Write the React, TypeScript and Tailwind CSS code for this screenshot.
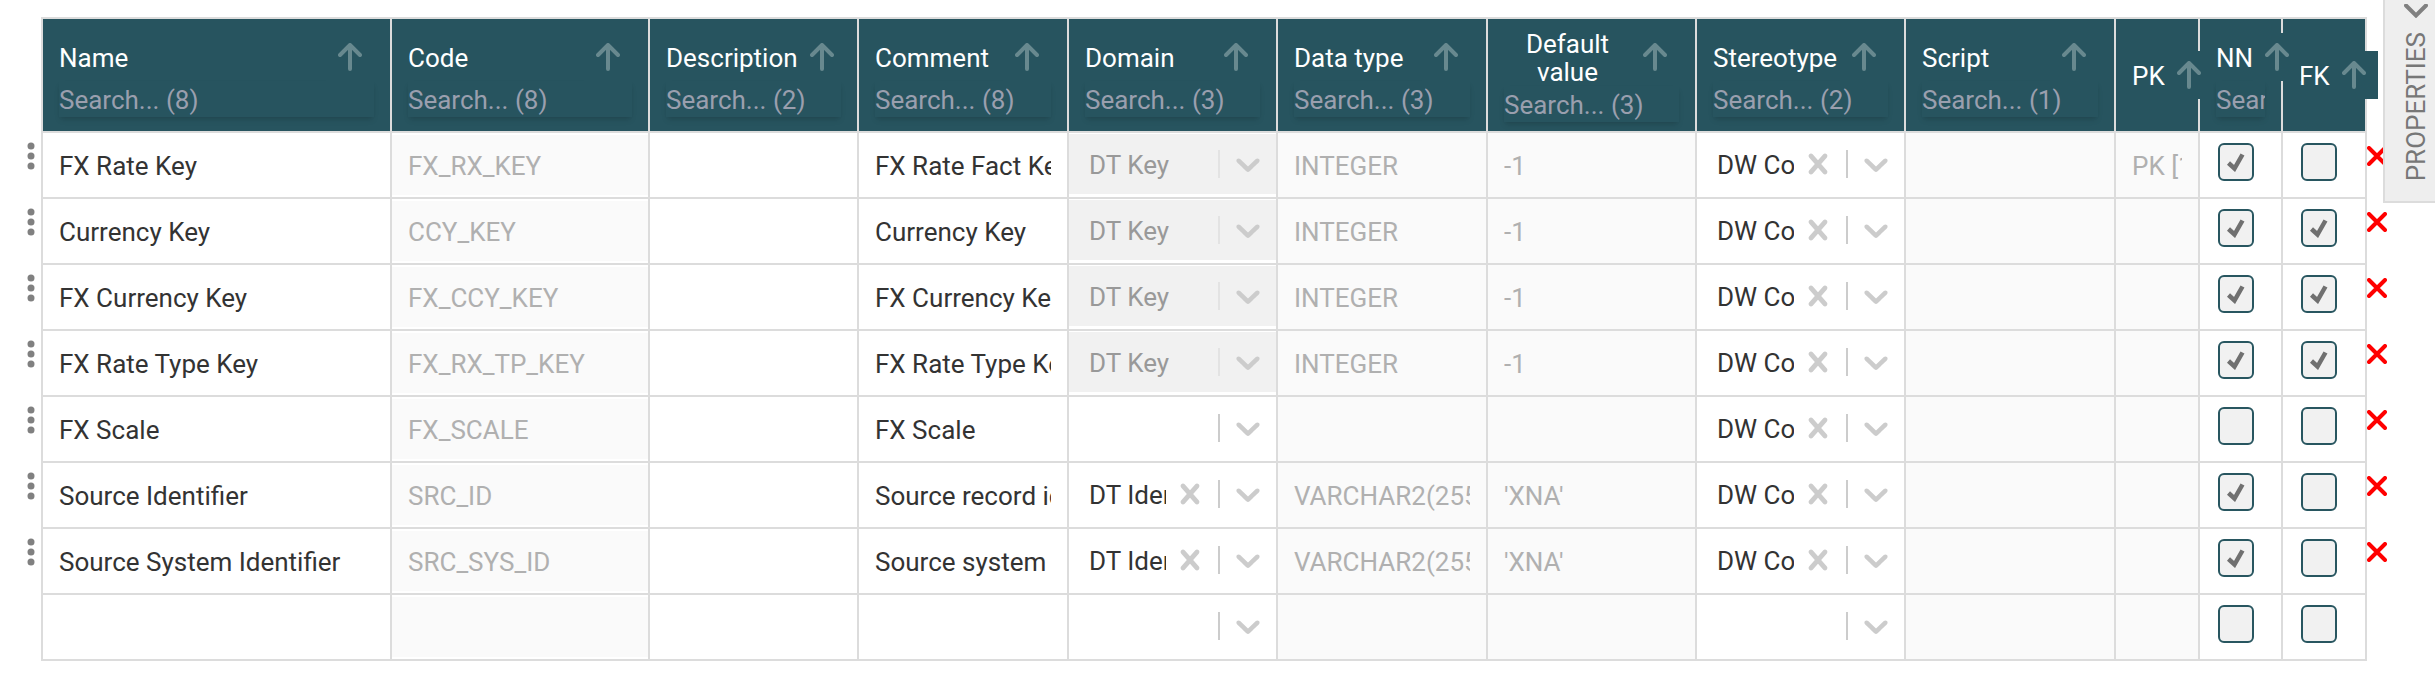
import { useState } from 'react';

type Row = {
  name: string;
  code: string;
  comment: string;
  domain: string;
  domainLocked?: boolean;
  dataType: string;
  defaultValue: string;
  stereotype: string;
  pk: string;
  nn: boolean;
  fk: boolean;
};

const columns = [
  { label: 'Name', count: 8, width: 'w-[349px]' },
  { label: 'Code', count: 8, width: 'w-[258px]' },
  { label: 'Description', count: 2, width: 'w-[209px]' },
  { label: 'Comment', count: 8, width: 'w-[210px]' },
  { label: 'Domain', count: 3, width: 'w-[209px]' },
  { label: 'Data type', count: 3, width: 'w-[210px]' },
  { label: 'Default value', count: 3, width: 'w-[209px]' },
  { label: 'Stereotype', count: 2, width: 'w-[209px]' },
  { label: 'Script', count: 1, width: 'w-[210px]' },
  { label: 'PK', count: 0, width: 'w-[84px]' },
  { label: 'NN', count: 2, width: 'w-[83px]' },
  { label: 'FK', count: 0, width: 'w-[84px]' },
];

const key = { domain: 'DT Key', domainLocked: true, dataType: 'INTEGER', defaultValue: '-1', stereotype: 'DW Column', pk: '' };
const source = { domain: 'DT Identifier', dataType: 'VARCHAR2(255 CHAR)', defaultValue: "'XNA'", stereotype: 'DW Column', pk: '' };

const initialRows: Row[] = [
  { ...key, name: 'FX Rate Key', code: 'FX_RX_KEY', comment: 'FX Rate Fact Key', pk: 'PK [1]', nn: true, fk: false },
  { ...key, name: 'Currency Key', code: 'CCY_KEY', comment: 'Currency Key', nn: true, fk: true },
  { ...key, name: 'FX Currency Key', code: 'FX_CCY_KEY', comment: 'FX Currency Key', nn: true, fk: true },
  { ...key, name: 'FX Rate Type Key', code: 'FX_RX_TP_KEY', comment: 'FX Rate Type Key', nn: true, fk: true },
  { name: 'FX Scale', code: 'FX_SCALE', comment: 'FX Scale', domain: '', dataType: '', defaultValue: '', stereotype: 'DW Column', pk: '', nn: false, fk: false },
  { ...source, name: 'Source Identifier', code: 'SRC_ID', comment: 'Source record identifier', nn: true, fk: false },
  { ...source, name: 'Source System Identifier', code: 'SRC_SYS_ID', comment: 'Source system identifier', nn: true, fk: false },
];

const emptyRow: Row = { name: '', code: '', comment: '', domain: '', dataType: '', defaultValue: '', stereotype: '', pk: '', nn: false, fk: false };

const ArrowUp = () => (
  <svg className="h-7 w-6" viewBox="0 0 24 28" fill="none" stroke="#68898f" strokeWidth="4" strokeLinecap="round" strokeLinejoin="round">
    <path d="M12 26V2.5M2 12L12 2l10 10" />
  </svg>
);

const ChevronDown = () => (
  <svg className="size-10" viewBox="0 0 20 20" fill="currentColor">
    <path d="M4.516 7.548c0.436-0.446 1.043-0.481 1.576 0l3.908 3.747 3.908-3.747c0.533-0.481 1.141-0.446 1.574 0 0.436 0.445 0.408 1.197 0 1.615-0.406 0.418-4.695 4.502-4.695 4.502-0.217 0.223-0.502 0.335-0.787 0.335s-0.57-0.112-0.789-0.335c0 0-4.287-4.084-4.695-4.502s-0.436-1.17 0-1.615z" />
  </svg>
);

const Cross = () => (
  <svg className="size-10" viewBox="0 0 20 20" fill="currentColor">
    <path d="M14.348 14.849c-0.469 0.469-1.229 0.469-1.697 0l-2.651-3.030-2.651 3.029c-0.469 0.469-1.229 0.469-1.697 0-0.469-0.469-0.469-1.229 0-1.697l2.758-3.15-2.759-3.152c-0.469-0.469-0.469-1.228 0-1.697s1.228-0.469 1.697 0l2.652 3.031 2.651-3.031c0.469-0.469 1.228-0.469 1.697 0s0.469 1.229 0 1.697l-2.758 3.152 2.758 3.15c0.469 0.469 0.469 1.229 0 1.698z" />
  </svg>
);

const Td = ({ muted, children }: { muted?: boolean; children: React.ReactNode }) => (
  <td className={`h-[66px] border-r-2 border-b-2 border-[#dcdcdc] p-0 align-middle ${muted ? 'bg-[#fafafa]' : 'bg-white'}`}>
    {children}
  </td>
);

const TextCell = ({ label, value, disabled }: { label: string; value: string; disabled?: boolean }) => (
  <input
    type="text"
    aria-label={label}
    defaultValue={value}
    disabled={disabled}
    className="block h-15 w-full px-4 pt-0.5 text-[#333] outline-none disabled:bg-[#fafafa] disabled:text-[#b0b0b0]"
  />
);

const SelectCell = ({ label, initial, disabled }: { label: string; initial: string; disabled?: boolean }) => {
  const [value, setValue] = useState(initial);

  return (
    <div className={`mb-0.5 flex h-15 items-center ${disabled ? 'bg-[#f1f1f1]' : 'bg-white'}`}>
      <select
        aria-label={label}
        value={value}
        disabled={disabled}
        onChange={(e) => setValue(e.target.value)}
        className="h-full min-w-0 flex-1 appearance-none pt-0.5 pl-5 text-[#333] outline-none disabled:text-[#999] disabled:opacity-100"
      >
        <option value=""></option>
        {initial && <option value={initial}>{initial}</option>}
      </select>
      {value && !disabled && (
        <button type="button" aria-label={`Clear ${label}`} onClick={() => setValue('')} className="-ml-1 flex w-14 shrink-0 justify-center text-[#ccc]">
          <Cross />
        </button>
      )}
      <span className={`h-7 w-0.5 shrink-0 ${disabled ? 'bg-[#e3e3e3]' : 'bg-[#ccc]'}`} />
      <span className="pointer-events-none flex w-14 shrink-0 justify-center text-[#ccc]">
        <ChevronDown />
      </span>
    </div>
  );
};

const CheckCell = ({ label, initial }: { label: string; initial: boolean }) => {
  const [checked, setChecked] = useState(initial);

  return (
    <label className="mb-1.5 ml-4.5 grid h-9.5 w-9 place-items-center">
      <input
        type="checkbox"
        aria-label={label}
        checked={checked}
        onChange={(e) => setChecked(e.target.checked)}
        className="col-start-1 row-start-1 size-full appearance-none rounded-md border-2 border-[#285660] bg-[#f1f1f1]"
      />
      {checked && (
        <svg className="pointer-events-none col-start-1 row-start-1 size-5" viewBox="0 0 20 20">
          <path d="M2.5 11L8.5 16.5L16.5 2.5" fill="none" stroke="#707070" strokeWidth="4.5" />
        </svg>
      )}
    </label>
  );
};

const RowCells = ({ row }: { row: Row }) => (
  <tr>
    <Td><TextCell label="Name" value={row.name} /></Td>
    <Td><TextCell label="Code" value={row.code} disabled /></Td>
    <Td><TextCell label="Description" value="" /></Td>
    <Td><TextCell label="Comment" value={row.comment} /></Td>
    <Td><SelectCell label="Domain" initial={row.domain} disabled={row.domainLocked} /></Td>
    <Td muted><TextCell label="Data type" value={row.dataType} disabled /></Td>
    <Td muted><TextCell label="Default value" value={row.defaultValue} disabled /></Td>
    <Td><SelectCell label="Stereotype" initial={row.stereotype} /></Td>
    <Td muted><TextCell label="Script" value="" disabled /></Td>
    <Td muted><TextCell label="PK" value={row.pk} disabled /></Td>
    <Td><CheckCell label="NN" initial={row.nn} /></Td>
    <Td><CheckCell label="FK" initial={row.fk} /></Td>
  </tr>
);

const App = () => {
  return (
    <main className="relative flex min-h-screen overflow-hidden bg-white pt-[17px] font-[Roboto,sans-serif] text-[26px] leading-7">
      {/* Row drag handles */}
      <div className="w-[41px] shrink-0 pt-[116px]">
        {initialRows.map((row) => (
          <div key={row.code} className="flex h-[66px] justify-end pt-[9px] pr-[6px]">
            <svg className="h-7 w-2" viewBox="0 0 8 28" fill="#808080">
              <circle cx="4" cy="4" r="3.5" />
              <circle cx="4" cy="14" r="3.5" />
              <circle cx="4" cy="24" r="3.5" />
            </svg>
          </div>
        ))}
      </div>

      <div className="min-w-0 flex-1">
        <table className="w-full table-fixed border-separate border-spacing-0 border-t-2 border-l-2 border-[#dcdcdc]">
          <colgroup>
            {columns.map((col) => (
              <col key={col.label} className={col.width} />
            ))}
          </colgroup>
          <thead>
            <tr>
              {columns.map((col) => (
                <th key={col.label} className="h-[114px] border-r-2 border-b-2 border-[#dcdcdc] bg-[#27545f] px-4 py-0 align-middle font-normal text-white">
                  <div className="flex items-center justify-between">
                    <span className="pt-0.5 text-center">{col.label}</span>
                    <button type="button" aria-label={`Sort by ${col.label}`} className="relative grid size-12 shrink-0 place-items-center bg-[#27545f]">
                      <ArrowUp />
                    </button>
                  </div>
                  {col.count > 0 && (
                    <input
                      type="text"
                      aria-label={`Search ${col.label}`}
                      placeholder={`Search... (${col.count})`}
                      className="block h-9 w-full bg-[#27545f] pt-0.5 shadow-md outline-none placeholder:text-[#9a9fae]"
                    />
                  )}
                </th>
              ))}
            </tr>
          </thead>
          <tbody>
            {initialRows.map((row) => (
              <RowCells key={row.code} row={row} />
            ))}
            <RowCells row={emptyRow} />
          </tbody>
        </table>
      </div>

      {/* Delete buttons */}
      <div className="w-[68px] shrink-0 pt-[116px]">
        {initialRows.map((row) => (
          <div key={row.code} className="h-[66px] pt-[13px]">
            <button type="button" aria-label={`Delete ${row.name}`} className="block">
              <svg className="size-5" viewBox="0 0 20 20" stroke="#ff0000" strokeWidth="4" strokeLinecap="round">
                <path d="M2 2l16 16M18 2L2 18" />
              </svg>
            </button>
          </div>
        ))}
      </div>

      {/* Collapsed side panel */}
      <button type="button" className="absolute top-0 right-0 flex h-[203px] w-[52px] flex-col items-center gap-3.5 border-b-2 border-l-2 border-[#dcdcdc] bg-[#eee] pt-1 pl-3 text-[#777]">
        <svg className="h-3.5 w-6 shrink-0" viewBox="0 0 24 14" fill="none" stroke="#808080" strokeWidth="4" strokeLinecap="round">
          <path d="M2 1.5l10 10 10-10" />
        </svg>
        <span className="rotate-180 [writing-mode:vertical-rl]">PROPERTIES</span>
      </button>
    </main>
  );
};

export default App;
